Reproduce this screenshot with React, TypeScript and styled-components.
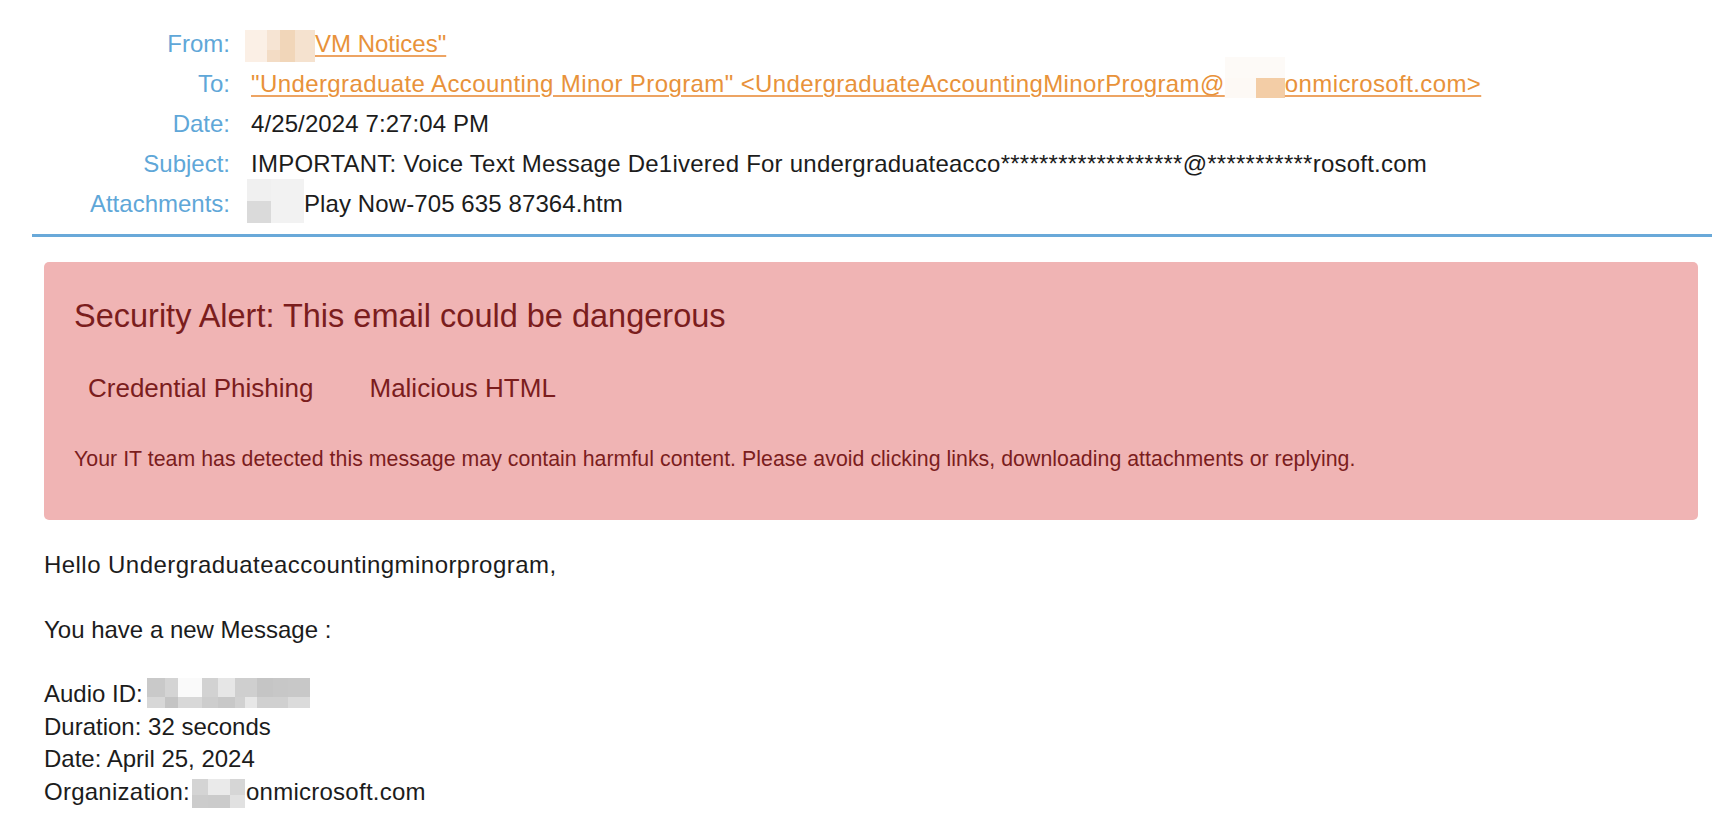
import React from "react";
import styled, { createGlobalStyle } from "styled-components";

const GlobalStyle = createGlobalStyle`
  html, body { margin: 0; padding: 0; background: #ffffff; }
  body {
    font-family: "Liberation Sans", Arial, Helvetica, sans-serif;
    color: #1c1c1c;
    -webkit-font-smoothing: antialiased;
  }
`;

const Page = styled.div`
  box-sizing: border-box;
  width: 1734px;
  padding: 24px 22px 0 32px;
`;

const Header = styled.div`
  display: grid;
  grid-template-columns: 198px 1fr;
  column-gap: 21px;
  padding-bottom: 10px;
  border-bottom: 3px solid #69a9d9;
  font-size: 24px;
  line-height: 40px;
`;

const Label = styled.div`
  text-align: right;
  color: #5fa7d8;
  white-space: nowrap;
`;

const Value = styled.div<{ $track?: number }>`
  white-space: nowrap;
  color: #1c1c1c;
  letter-spacing: ${(p) => p.$track ?? 0}px;
`;

const Link = styled.span`
  color: #e8923a;
  text-decoration: underline;
  text-decoration-color: #eda463;
  text-decoration-thickness: 1.5px;
  text-underline-offset: 3px;
`;

const Mosaic = styled.span<{ $h: number; $drop: number; $ml?: number; $mr?: number }>`
  display: inline-block;
  overflow: hidden;
  vertical-align: baseline;
  height: ${(p) => p.$h}px;
  margin: ${(p) => -(p.$h - p.$drop - 10)}px ${(p) => p.$mr ?? 0}px
    ${(p) => -p.$drop}px ${(p) => p.$ml ?? 0}px;
`;

const MosaicGrid = styled.span<{ $cols: string; $rows: string }>`
  display: grid;
  grid-template-columns: ${(p) => p.$cols};
  grid-template-rows: ${(p) => p.$rows};
  height: 100%;
`;

const Cell = styled.span<{ $c: string }>`
  display: block;
  background: ${(p) => p.$c};
`;

type MosaicSpec = {
  cols: number[];
  rows: number[];
  colors: string[];
  drop: number;
  ml?: number;
  mr?: number;
};

const Redaction: React.FC<{ spec: MosaicSpec }> = ({ spec }) => {
  const h = spec.rows.reduce((a, b) => a + b, 0);
  return (
    <Mosaic $h={h} $drop={spec.drop} $ml={spec.ml} $mr={spec.mr} aria-hidden>
      <MosaicGrid
        $cols={spec.cols.map((c) => `${c}px`).join(" ")}
        $rows={spec.rows.map((r) => `${r}px`).join(" ")}
      >
        {spec.colors.map((c, i) => (
          <Cell key={i} $c={c} />
        ))}
      </MosaicGrid>
    </Mosaic>
  );
};

const fromBlur: MosaicSpec = {
  cols: [22, 13, 15, 20],
  rows: [20, 12],
  colors: ["#fbf0e6", "#f6e4d3", "#f1d6b9", "#f5e2cf", "#fbefe5", "#f3dcc5", "#f1d6b9", "#f5e2cf"],
  drop: 10,
  ml: -6,
};

const toBlur: MosaicSpec = {
  cols: [31, 29],
  rows: [21, 20],
  colors: ["#fdfaf7", "#fdfaf7", "#fdf9f5", "#f3cda6"],
  drop: 6,
};

const attachBlur: MosaicSpec = {
  cols: [24, 33],
  rows: [22, 22],
  colors: ["#f0f0f0", "#f2f2f2", "#dadada", "#f2f2f2"],
  drop: 11,
  ml: -4,
};

const audioBlur: MosaicSpec = {
  cols: [18, 13, 24, 16, 17, 10, 12, 16, 15, 22],
  rows: [19, 11],
  colors: [
    "#c9c9c9", "#d4d4d4", "#fafafa", "#d2d2d2", "#e6e6e6", "#cfcfcf", "#cfcfcf", "#c5c5c5", "#c7c7c7", "#c8c8c8",
    "#d7d7d7", "#c4c4c4", "#d8d8d8", "#cdcdcd", "#c8c8c8", "#d1d1d1", "#e7e7e7", "#d0d0d0", "#d0d0d0", "#dbdbdb",
  ],
  drop: 6,
  ml: 4,
};

const orgBlur: MosaicSpec = {
  cols: [16, 22, 15],
  rows: [16, 18],
  colors: ["#d4d4d4", "#eaeaea", "#d6d6d6", "#cccccc", "#cbcbcb", "#e1e1e1"],
  drop: 13,
  ml: 2,
  mr: 1,
};

const Alert = styled.section`
  margin: 25px 14px 0 12px;
  padding: 36px 30px 48px;
  background: #f0b4b4;
  border-radius: 5px;
  color: #7b1d1d;
`;

const AlertTitle = styled.h2`
  margin: 0;
  font-size: 32.5px;
  line-height: 36px;
  font-weight: normal;
`;

const TagRow = styled.div`
  display: flex;
  gap: 28px;
  margin-top: 39px;
`;

const Tag = styled.span`
  padding: 0 14px;
  font-size: 26px;
  line-height: 30px;
`;

const AlertNote = styled.p`
  margin: 43px 0 0;
  font-size: 21.3px;
  line-height: 26px;
  letter-spacing: 0.04px;
`;

const Message = styled.div`
  margin: 29px 0 0 12px;
  font-size: 24px;
  line-height: 32.5px;
  color: #1c1c1c;
`;

const Para = styled.div<{ $track?: number }>`
  margin-bottom: 32px;
  letter-spacing: ${(p) => p.$track ?? 0}px;
`;

const Line = styled.div<{ $track?: number }>`
  white-space: nowrap;
  letter-spacing: ${(p) => p.$track ?? 0}px;
`;

export default function App() {
  return (
    <>
      <GlobalStyle />
      <Page>
        <Header>
          <Label>From:</Label>
          <Value>
            <Redaction spec={fromBlur} />
            <Link>VM Notices"</Link>
          </Value>
          <Label>To:</Label>
          <Value $track={0.4}>
            <Link>"Undergraduate Accounting Minor Program" &lt;UndergraduateAccountingMinorProgram@</Link>
            <Redaction spec={toBlur} />
            <Link>onmicrosoft.com&gt;</Link>
          </Value>
          <Label>Date:</Label>
          <Value $track={0.1}>4/25/2024 7:27:04 PM</Value>
          <Label>Subject:</Label>
          <Value $track={0.24}>
            IMPORTANT: Voice Text Message De1ivered For undergraduateacco*******************@***********rosoft.com
          </Value>
          <Label>Attachments:</Label>
          <Value $track={0.1}>
            <Redaction spec={attachBlur} />
            Play Now-705 635 87364.htm
          </Value>
        </Header>

        <Alert>
          <AlertTitle>Security Alert: This email could be dangerous</AlertTitle>
          <TagRow>
            <Tag>Credential Phishing</Tag>
            <Tag>Malicious HTML</Tag>
          </TagRow>
          <AlertNote>
            Your IT team has detected this message may contain harmful content. Please avoid clicking links, downloading attachments or replying.
          </AlertNote>
        </Alert>

        <Message>
          <Para $track={0.45}>Hello Undergraduateaccountingminorprogram,</Para>
          <Para>You have a new Message :</Para>
          <Line>
            Audio ID:
            <Redaction spec={audioBlur} />
          </Line>
          <Line>Duration: 32 seconds</Line>
          <Line>Date: April 25, 2024</Line>
          <Line $track={0.25}>
            Organization:
            <Redaction spec={orgBlur} />
            onmicrosoft.com
          </Line>
        </Message>
      </Page>
    </>
  );
}
